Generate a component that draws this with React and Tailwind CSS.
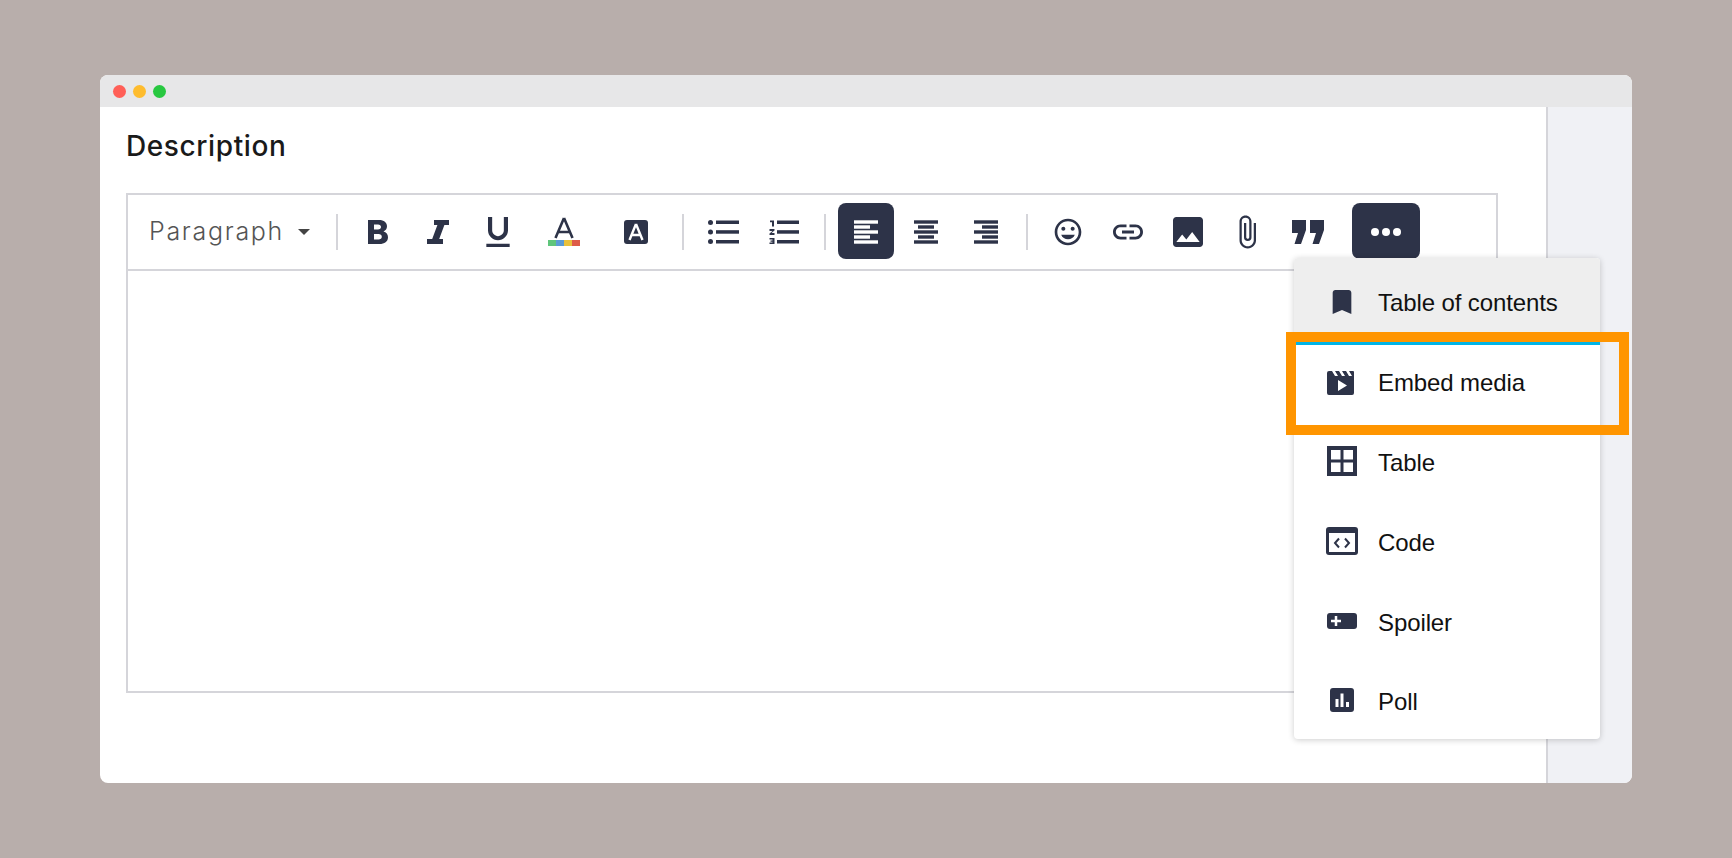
import {
  MdFormatUnderlined,
  MdInsertEmoticon,
  MdLink,
  MdPhoto,
  MdAttachFile,
  MdBookmark,
} from 'react-icons/md';

function AlignLines({ rows }) {
  return (
    <svg width="24" height="24" viewBox="0 0 24 24" fill="currentColor">
      {rows.map(([x, w], i) => (
        <rect key={i} x={x} y={i * 5 + 0.3} width={w} height="3.4" />
      ))}
    </svg>
  );
}

function Sep({ className }) {
  return <div className={`w-[2px] h-9 bg-[#d5d5da] shrink-0 ${className}`}></div>;
}

function Btn({ children, className = 'w-[60px]' }) {
  return <div className={`h-14 flex items-center justify-center shrink-0 text-[#2d3348] ${className}`}>{children}</div>;
}

function MenuItem({ icon, text, className = 'h-20', labelClass = 'pt-[3px]' }) {
  return (
    <div className={`flex items-center ${className}`}>
      <div className="w-[84px] flex justify-center text-[#2d3348] pl-[11px] shrink-0">{icon}</div>
      <span className={`text-[24px] leading-none text-[#111] tracking-[-0.1px] ${labelClass}`}>{text}</span>
    </div>
  );
}

export default function App() {
  return (
    <div className="h-screen bg-[#b8aeab] pt-[75px] pl-[100px] overflow-hidden font-['Liberation_Sans',sans-serif]">
      <div className="relative w-[1532px] h-[708px] rounded-lg overflow-hidden bg-white flex flex-col">
        {/* barra da janela */}
        <div className="h-8 bg-[#e7e7e8] flex items-center gap-[7px] pl-[13px] pt-[1px] shrink-0">
          <div className="w-[13px] h-[13px] rounded-full bg-[#ff5f57]"></div>
          <div className="w-[13px] h-[13px] rounded-full bg-[#febc2e]"></div>
          <div className="w-[13px] h-[13px] rounded-full bg-[#28c840]"></div>
        </div>

        <div className="flex flex-1">
          <div className="w-[1448px] border-r-2 border-[#d5d5da] pl-[26px]">
            <h1 className="pt-[22px] mb-[30px] leading-[34px] text-[28px] font-medium tracking-[0.6px] text-[#1a1a1a] font-['Inter',sans-serif]">
              Description
            </h1>

            {/* editor */}
            <div className="w-[1372px] h-[500px] border-2 border-[#d5d5da] flex flex-col">
              <div className="h-[76px] border-b-2 border-[#d5d5da] flex items-center shrink-0 pb-[1px]">
                <span className="ml-[21px] w-[134px] text-[25px] text-[#555] font-light tracking-[1.7px] font-['Inter',sans-serif]">
                  Paragraph
                </span>
                <svg className="ml-[15px] shrink-0" width="12" height="6" viewBox="0 0 12 6" fill="#444">
                  <path d="M0 0h12L6 6z" />
                </svg>
                <Sep className="ml-[26px]" />
                <Btn className="w-[60px] ml-[9.5px]">
                  <svg width="20" height="24" viewBox="0 0 20 24" fill="currentColor">
                    <path
                      fillRule="evenodd"
                      d="M0 0h11c5 0 8 2.500 8 6.300 0 2.500-1.300 4.300-3.500 5.200 2.800.8 4.500 2.900 4.500 5.700C20 21.500 16.500 24 11.500 24H0zM6 4.500v5h4c1.800 0 3-.9 3-2.500s-1.200-2.500-3-2.500zM6 14v5.500h4.500c2 0 3.300-1 3.300-2.750S12.500 14 10.500 14z"
                    />
                  </svg>
                </Btn>
                <Btn>
                  <svg width="22" height="24" viewBox="0 0 22 24" fill="currentColor">
                    <path d="M7 0h15v5h-4.600l-5.200 14H16v5H0v-5h5.200L10.400 5H7z" />
                  </svg>
                </Btn>
                <Btn><MdFormatUnderlined size={40} /></Btn>
                <Btn className="w-[60px] ml-[6px]">
                  <svg width="32" height="30" viewBox="0 0 32 30">
                    <path d="M16 1 7.500 21M16 1l8.500 20M10.500 15h11" fill="none" stroke="currentColor" strokeWidth="2.600" />
                    <rect x="0" y="23" width="8" height="6" fill="#5fc57b" />
                    <rect x="8" y="23" width="8" height="6" fill="#5b9bd5" />
                    <rect x="16" y="23" width="8" height="6" fill="#e9c13c" />
                    <rect x="24" y="23" width="8" height="6" fill="#dd5b48" />
                  </svg>
                </Btn>
                <Btn className="w-[60px] ml-[12px]">
                  <svg width="24" height="24" viewBox="0 0 24 24">
                    <rect width="24" height="24" rx="3" fill="currentColor" />
                    <path d="M12 4 5.500 20M12 4l6.500 16M8 15h8" fill="none" stroke="#fff" strokeWidth="2.400" />
                  </svg>
                </Btn>
                <Sep className="ml-[16px]" />
                <Btn className="w-[60px] ml-[10px]">
                  <svg width="31" height="24" viewBox="0 0 31 24" fill="currentColor">
                    <circle cx="2.500" cy="2.500" r="2.500" />
                    <circle cx="2.500" cy="12" r="2.500" />
                    <circle cx="2.500" cy="21.500" r="2.500" />
                    <rect x="8" y="0.500" width="23" height="3.500" />
                    <rect x="8" y="10.200" width="23" height="3.500" />
                    <rect x="8" y="20" width="23" height="3.500" />
                  </svg>
                </Btn>
                <Btn>
                  <svg width="30" height="24" viewBox="0 0 30 24" fill="currentColor">
                    <path d="M1 0.500h4v6H3V2.200H1zM.500 9h5v1.500l-3 2.500h3v2h-5v-1.600l3-2.400h-3zM.500 18h5v6h-5v-1.600h3V21.700h-2v-1.300h2V19.600h-3z" />
                    <rect x="8" y="0.500" width="22" height="3.500" />
                    <rect x="8" y="10.200" width="22" height="3.500" />
                    <rect x="8" y="20" width="22" height="3.500" />
                  </svg>
                </Btn>
                <Sep className="ml-[10px]" />
                <Btn className="w-14 ml-[12px] -mt-[2px] pt-[2px] rounded-lg bg-[#2d3348] !text-white">
                  <AlignLines rows={[[0, 24], [0, 16], [0, 24], [0, 16], [0, 24]]} />
                </Btn>
                <Btn className="w-[60px] ml-[2px]">
                  <AlignLines rows={[[0, 24], [4, 16], [0, 24], [4, 16], [0, 24]]} />
                </Btn>
                <Btn>
                  <AlignLines rows={[[0, 24], [8, 16], [0, 24], [8, 16], [0, 24]]} />
                </Btn>
                <Sep className="ml-[10px]" />
                <Btn className="w-[60px] ml-[10px]"><MdInsertEmoticon size={32} /></Btn>
                <Btn><MdLink size={36} /></Btn>
                <Btn><MdPhoto size={40} /></Btn>
                <Btn className="w-[60px] -ml-[1px]"><MdAttachFile size={36} /></Btn>
                <Btn className="w-[60px] ml-[1px]">
                  <svg width="32" height="24" viewBox="0 0 32 24" fill="currentColor">
                    <path d="M0 0h14v10L9 24H2.500L6 13H0zM18 0h14v10l-5 14h-6.500L24 13h-6z" />
                  </svg>
                </Btn>
                <Btn className="w-[68px] ml-[14px] -mt-[2px] pt-[2px] rounded-lg bg-[#2d3348] !text-white gap-[3px]">
                  <div className="w-2 h-2 rounded-full bg-white"></div>
                  <div className="w-2 h-2 rounded-full bg-white"></div>
                  <div className="w-2 h-2 rounded-full bg-white"></div>
                </Btn>
              </div>
            </div>
          </div>
          <div className="flex-1 bg-[#f0f1f5]"></div>
        </div>

        {/* dropdown */}
        <div className="absolute left-[1194px] top-[183px] w-[306px] h-[481px] bg-white rounded shadow-[0_1px_6px_rgba(0,0,0,0.2)] overflow-hidden">
          <MenuItem
            className="h-[84px] bg-[#eeeeee] pt-[4px]"
            labelClass="pt-[1px]"
            icon={<MdBookmark size={32} />}
            text="Table of contents"
          />
          <MenuItem
            className="h-[79px] border-t-[3px] border-[#00b4e6]"
            labelClass="pb-[1px]"
            icon={
              <svg width="30" height="24" viewBox="0 0 30 24" fill="currentColor">
                <path d="M2 0h3l3 5h3L8 0h4l3 5h3l-3-5h4l3 5h3l-3-5h4a1 1 0 0 1 1 1v21a2 2 0 0 1-2 2H2a2 2 0 0 1-2-2V2a2 2 0 0 1 2-2zM11 9v11l9-5.500z" fillRule="evenodd" />
              </svg>
            }
            text="Embed media"
          />
          <MenuItem
            icon={
              <svg width="30" height="30" viewBox="0 0 30 30" fill="currentColor">
                <path fillRule="evenodd" d="M0 0h30v30H0zM4 4v9.500h9.500V4zm12.500 0v9.500H26V4zM4 16.500V26h9.500v-9.500zm12.500 0V26H26v-9.500z" />
              </svg>
            }
            text="Table"
          />
          <MenuItem
            icon={
              <svg width="32" height="28" viewBox="0 0 32 28">
                <rect width="32" height="28" rx="3" fill="currentColor" />
                <rect x="3" y="6" width="26" height="19" fill="#fff" />
                <path d="M13 11.500 9 16l4 4.500M19 11.500l4 4.500-4 4.500" fill="none" stroke="currentColor" strokeWidth="2" />
              </svg>
            }
            text="Code"
          />
          <MenuItem
            icon={
              <svg width="30" height="16" viewBox="0 0 30 16">
                <rect width="30" height="16" rx="3" fill="currentColor" />
                <path d="M9 3v10M4 8h10" stroke="#fff" strokeWidth="2.500" fill="none" />
              </svg>
            }
            text="Spoiler"
          />
          <MenuItem
            className="h-[78px]"
            icon={
              <svg width="24" height="24" viewBox="0 0 24 24">
                <rect width="24" height="24" rx="3" fill="currentColor" />
                <path d="M5.500 11h3v8h-3zM10.500 5.500h3V19h-3zM16 14h3v5h-3z" fill="#fff" />
              </svg>
            }
            text="Poll"
          />
        </div>

        {/* destaque laranja */}
        <div className="absolute left-[1186px] top-[257px] w-[343px] h-[103px] border-[10px] border-[#ff9500]"></div>
      </div>
    </div>
  );
}
